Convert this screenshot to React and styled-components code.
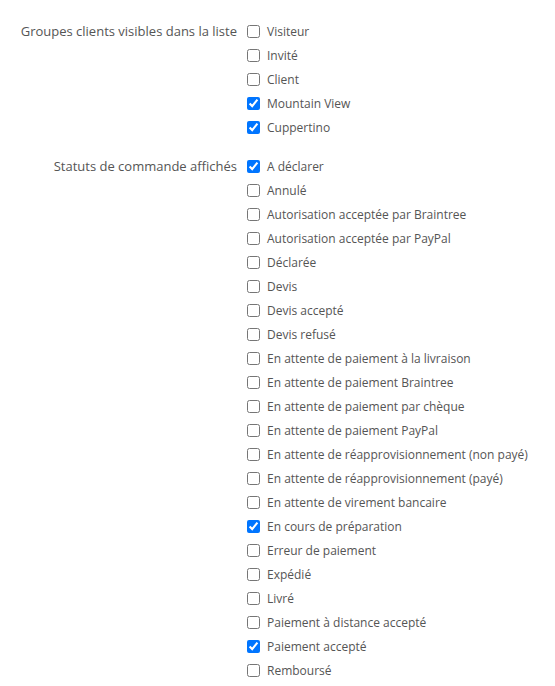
import React from "react";
import styled, { createGlobalStyle } from "styled-components";

const GlobalStyle = createGlobalStyle`
  body {
    margin: 0;
    background: #fff;
    font-family: "Open Sans", sans-serif;
  }
`;

const groups = [
  { name: "Visiteur", checked: false },
  { name: "Invité", checked: false },
  { name: "Client", checked: false },
  { name: "Mountain View", checked: true },
  { name: "Cuppertino", checked: true },
];

const statuses = [
  { name: "A déclarer", checked: true },
  { name: "Annulé", checked: false },
  { name: "Autorisation acceptée par Braintree", checked: false },
  { name: "Autorisation acceptée par PayPal", checked: false },
  { name: "Déclarée", checked: false },
  { name: "Devis", checked: false },
  { name: "Devis accepté", checked: false },
  { name: "Devis refusé", checked: false },
  { name: "En attente de paiement à la livraison", checked: false },
  { name: "En attente de paiement Braintree", checked: false },
  { name: "En attente de paiement par chèque", checked: false },
  { name: "En attente de paiement PayPal", checked: false },
  { name: "En attente de réapprovisionnement (non payé)", checked: false },
  { name: "En attente de réapprovisionnement (payé)", checked: false },
  { name: "En attente de virement bancaire", checked: false },
  { name: "En cours de préparation", checked: true },
  { name: "Erreur de paiement", checked: false },
  { name: "Expédié", checked: false },
  { name: "Livré", checked: false },
  { name: "Paiement à distance accepté", checked: false },
  { name: "Paiement accepté", checked: true },
  { name: "Remboursé", checked: false },
];

export default function App() {
  return (
    <>
      <GlobalStyle />
      <Form>
        <Field label="Groupes clients visibles dans la liste" items={groups} />
        <Field label="Statuts de commande affichés" items={statuses} />
      </Form>
    </>
  );
}

function Field({ label, items }) {
  return (
    <FormGroup>
      <Label>{label}</Label>
      <CheckList>
        {items.map((item) => (
          <CheckRow key={item.name}>
            <Box type="checkbox" defaultChecked={item.checked} />
            <span>{item.name}</span>
          </CheckRow>
        ))}
      </CheckList>
    </FormGroup>
  );
}

const Form = styled.div`
  padding-top: 19px;
  display: flex;
  flex-direction: column;
  gap: 15px;
`;

const FormGroup = styled.div`
  display: grid;
  grid-template-columns: 237px 1fr;
  column-gap: 6px;
`;

const Label = styled.div`
  text-align: right;
  font-size: 13px;
  line-height: 24px;
  color: #555;
`;

const CheckList = styled.div`
  display: flex;
  flex-direction: column;
`;

const CheckRow = styled.label`
  display: flex;
  align-items: center;
  height: 24px;
  font-size: 12px;
  color: #555;
`;

const Box = styled.input`
  width: 13px;
  height: 13px;
  margin: 0 7px 0 4px;
  accent-color: #0075ff;
`;
